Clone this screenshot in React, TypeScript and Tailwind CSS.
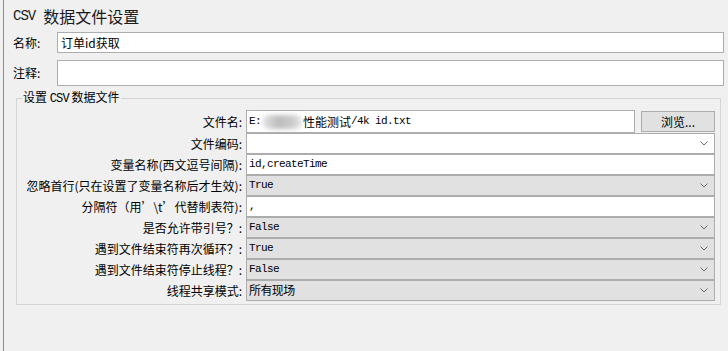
import React from 'react';

const cjk = "font-['Noto_Sans_CJK_SC','Noto_Sans',sans-serif]";
const mono = "font-['Liberation_Mono','Noto_Sans_CJK_SC',monospace] text-[11px] tracking-[-0.6px]";

const Chevron = () => (
  <svg width="8" height="5" viewBox="0 0 8 5" className="shrink-0">
    <path d="M0.5 0.5 L4 4 L7.5 0.5" fill="none" stroke="#6b6b6b" strokeWidth="1" />
  </svg>
);

interface RowProps {
  label: string;
  value?: React.ReactNode;
  kind: 'text' | 'combo' | 'disabled';
}

const rows: RowProps[] = [
  { label: '文件编码:', kind: 'combo' },
  { label: '变量名称(西文逗号间隔):', value: 'id,createTime', kind: 'text' },
  { label: '忽略首行(只在设置了变量名称后才生效):', value: 'True', kind: 'disabled' },
  { label: '分隔符（用’\\t’代替制表符):', value: ',', kind: 'text' },
  { label: '是否允许带引号？:', value: 'False', kind: 'disabled' },
  { label: '遇到文件结束符再次循环？:', value: 'True', kind: 'disabled' },
  { label: '遇到文件结束符停止线程？:', value: 'False', kind: 'disabled' },
  { label: '线程共享模式:', value: <span className={`${cjk} text-[12px]`}>所有现场</span>, kind: 'disabled' },
];

const FieldRow = ({ label, value, kind }: RowProps) => (
  <div className="flex items-center h-[21px]">
    <div className={`w-[226px] text-right text-[12px] text-black whitespace-nowrap pr-[1px] ${cjk}`}>{label}</div>
    <div
      className={`ml-[3px] flex-1 h-[21px] flex items-center border border-[#adadad] pl-[2px] pr-[6px] ${
        kind === 'disabled' ? 'bg-[#e1e1e1]' : 'bg-white'
      }`}
    >
      <span className={`flex-1 text-black ${mono}`}>{value}</span>
      {kind !== 'text' && <Chevron />}
    </div>
  </div>
);

export default function App() {
  return (
    <div className="w-[728px] h-[351px] bg-[#f0f0f0] pl-[3px] overflow-hidden">
      <div className="h-full border-l border-[#8c8c8c] pl-[9px] pr-[4px] pt-[3px]">
        <div className={`h-[26px] flex items-center text-[16px] text-[#1a1a1a] ${cjk}`}>
          <span className="font-['Liberation_Mono',monospace] text-[14px] tracking-[-1px] mr-[8px]">CSV</span>
          数据文件设置
        </div>

        <div className="mt-[3px] flex items-center h-[21px]">
          <span className={`w-[44px] text-[12px] text-black ${cjk}`}>名称:</span>
          <div className={`flex-1 h-[21px] bg-white border border-[#adadad] flex items-center pl-[3px] text-[12px] text-black ${cjk}`}>
            订单id获取
          </div>
        </div>
        <div className="mt-[7px] flex items-center h-[26px]">
          <span className={`w-[44px] text-[12px] text-black ${cjk}`}>注释:</span>
          <div className="flex-1 h-[26px] bg-white border border-[#adadad]" />
        </div>

        <fieldset className="mt-[3px] ml-[3px] mr-[3px] border border-[#d5d5d5] pb-[3px] pr-[5px]">
          <legend className={`ml-[5px] px-[1px] leading-[16px] text-[12px] text-black ${cjk}`}>
            设置 <span className="font-['Liberation_Mono',monospace] text-[12px] tracking-[-0.8px]">CSV</span> 数据文件
          </legend>
          <div className="mt-[3px] flex items-center h-[23px]">
            <div className={`w-[226px] text-right text-[12px] text-black pr-[1px] ${cjk}`}>文件名:</div>
            <div className="ml-[3px] flex-1 h-[23px] bg-white border border-[#adadad] flex items-center pl-[2px] overflow-hidden">
              <span className={`text-black ${mono}`}>E:</span>
              <span className="inline-block w-[40px] h-[14px] mx-[1px] rounded-full bg-[linear-gradient(90deg,#e6e6e6,#bdbdbd_40%,#c8c8c8_70%,#e4e4e4)] blur-[2px]" />
              <span className={`text-[12px] text-black ${cjk}`}>性能测试</span>
              <span className={`text-black ${mono}`}>/4k id.txt</span>
            </div>
            <button className={`ml-[6px] w-[74px] h-[21px] bg-[#e1e1e1] border border-[#adadad] text-[12px] text-black ${cjk}`}>
              浏览...
            </button>
          </div>
          {rows.map((r) => (
            <FieldRow key={r.label} {...r} />
          ))}
        </fieldset>
      </div>
    </div>
  );
}
